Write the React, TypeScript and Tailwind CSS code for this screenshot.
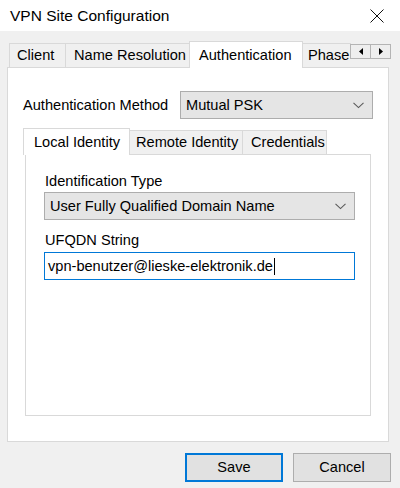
import React from "react";

function Chevron() {
  return (
    <svg width="11" height="7" viewBox="0 0 11 7" className="shrink-0">
      <polyline points="0.5,0.8 5.5,5.6 10.5,0.8" fill="none" stroke="#5a5a5a" strokeWidth="1.1" />
    </svg>
  );
}

function Combo({ value, className }: { value: string; className: string }) {
  return (
    <div className={`flex h-[28px] items-center justify-between border border-[#adadad] bg-[#e5e5e5] pl-[5px] pr-[8px] ${className}`}>
      <span>{value}</span>
      <Chevron />
    </div>
  );
}

function ScrollArrow({ dir }: { dir: "left" | "right" }) {
  return (
    <div className="flex h-[15px] w-[21px] items-center justify-center border border-[#b4b4b4] bg-[#eeeeee] -ml-px">
      <svg width="4" height="7" viewBox="0 0 4 7">
        {dir === "left" ? <polygon points="4,0 4,7 0,3.5" fill="#000" /> : <polygon points="0,0 0,7 4,3.5" fill="#000" />}
      </svg>
    </div>
  );
}

const tab = "mt-[2px] h-[24px] border border-b-0 border-[#d9d9d9] bg-[#f0f0f0] flex items-center shrink-0 whitespace-nowrap -ml-px";
const activeTab = "h-[27px] border border-b-0 border-[#d9d9d9] bg-white flex items-center shrink-0 whitespace-nowrap relative z-10 -ml-px";

export default function App() {
  return (
    <div className="flex h-[488px] w-[400px] flex-col bg-[#f0f0f0] font-['Liberation_Sans',Arial,sans-serif] text-[14.6px] leading-[17px] text-black">
      {/* title bar */}
      <div className="flex h-[31px] items-center justify-between bg-white pl-[10px] pr-[16px]">
        <span className="text-[15.5px]">VPN Site Configuration</span>
        <svg width="14" height="14" viewBox="0 0 14 14">
          <line x1="0.5" y1="0.5" x2="13.5" y2="13.5" stroke="#111" strokeWidth="1" />
          <line x1="13.5" y1="0.5" x2="0.5" y2="13.5" stroke="#111" strokeWidth="1" />
        </svg>
      </div>

      <div className="pl-[7px] pr-[11px] pt-[10px]">
        {/* outer tab strip */}
        <div className="relative z-10 -mb-px flex h-[27px] items-start">
          <div className="flex flex-1 items-start overflow-hidden pl-[3px]">
            <div className={`${tab} w-[57px] pl-[7px]`}>Client</div>
            <div className={`${tab} w-[125px] pl-[8px]`}>Name Resolution</div>
            <div className={`${activeTab} w-[114px] pl-[9px]`}>Authentication</div>
            <div className={`${tab} w-[60px] pl-[5px]`}>Phase</div>
          </div>
          <div className="mt-[3px] -mr-[2px] flex">
            <ScrollArrow dir="left" />
            <ScrollArrow dir="right" />
          </div>
        </div>

        {/* authentication page */}
        <div className="flex h-[375px] flex-col border border-[#d9d9d9] bg-white px-[15px] pt-[23px]">
          <div className="flex items-center justify-between">
            <span>Authentication Method</span>
            <Combo value="Mutual PSK" className="w-[193px]" />
          </div>

          <div className="mt-[9px] flex flex-col">
            {/* inner tab strip */}
            <div className="relative z-10 -mb-px flex h-[27px] items-start pl-px">
              <div className={`${activeTab} w-[107px] pl-[10px]`}>Local Identity</div>
              <div className={`${tab} w-[114px] pl-[6px]`}>Remote Identity</div>
              <div className={`${tab} w-[85px] pl-[8px]`}>Credentials</div>
            </div>

            <div className="ml-[2px] flex h-[262px] w-[346px] flex-col border border-[#d9d9d9] bg-white pl-[18px] pt-[18px]">
              <span className="pl-px">Identification Type</span>
              <Combo value="User Fully Qualified Domain Name" className="mt-[2px] w-[311px]" />
              <span className="mt-[12px] pl-px">UFQDN String</span>
              <div className="mt-[3px] flex h-[28px] w-[311px] items-center border border-[#0078d7] bg-white pl-[3px]">
                <span>vpn-benutzer@lieske-elektronik.de</span>
                <span className="ml-px h-[17px] w-px bg-black" />
              </div>
            </div>
          </div>
        </div>
      </div>

      {/* dialog buttons */}
      <div className="mt-[11px] flex justify-end gap-[10px] pr-[9px]">
        <button className="flex h-[29px] w-[98px] items-center justify-center border-2 border-[#0078d7] bg-[#e1e1e1]">Save</button>
        <button className="flex h-[29px] w-[98px] items-center justify-center border border-[#adadad] bg-[#e1e1e1]">Cancel</button>
      </div>
    </div>
  );
}
